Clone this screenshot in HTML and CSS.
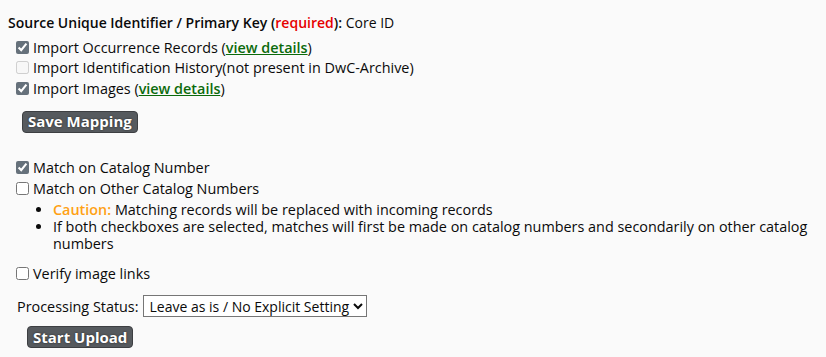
FILE: index.html
```html
<!DOCTYPE html>
<html>
<head>
<meta charset="utf-8">
<link rel="stylesheet" href="styles.css">
</head>
<body>
<div class="page">
  <div class="title"><b>Source Unique Identifier / Primary Key (<span class="req">required</span>):</b> Core ID</div>
  <div class="imports">
    <div class="row"><input type="checkbox" checked> <span>Import Occurrence Records (<a href="#">view details</a>)</span></div>
    <div class="row"><input type="checkbox" disabled> <span>Import Identification History(not present in DwC-Archive)</span></div>
    <div class="row"><input type="checkbox" checked> <span>Import Images (<a href="#">view details</a>)</span></div>
    <div class="btnrow save"><button class="btn">Save Mapping</button></div>
  </div>
  <div class="match">
    <div class="row"><input type="checkbox" checked> <span>Match on Catalog Number</span></div>
    <div class="row"><input type="checkbox"> <span>Match on Other Catalog Numbers</span></div>
    <ul class="notes">
      <li><span class="caution">Caution:</span> Matching records will be replaced with incoming records</li>
      <li>If both checkboxes are selected, matches will first be made on catalog numbers and secondarily on other catalog numbers</li>
    </ul>
    <div class="row verify"><input type="checkbox"> <span>Verify image links</span></div>
    <div class="status">Processing Status: <select><option>Leave as is / No Explicit Setting</option></select></div>
    <div class="btnrow upload"><button class="btn">Start Upload</button></div>
  </div>
</div>
</body>
</html>
```
FILE: styles.css
```css
html, body { margin: 0; padding: 0; background: #fafafa; }
body {
  font-family: "Open Sans", "Liberation Sans", sans-serif;
  font-size: 14.4px;
  color: #0a0a0a;
}
.page { padding: 14px 8px 0 8px; }
.title { line-height: 18px; font-size: 14px; }
.title b { font-weight: 600; }
.req { color: #e60000; }
.imports { margin-top: 5px; padding-left: 8px; }
.row { display: flex; align-items: center; height: 20.5px; }
.row input {
  margin: 0 4px 0 0;
  width: 13px; height: 13px;
  accent-color: #66717b;
}
.row span { white-space: nowrap; }
a { color: #0b6a0b; font-weight: 600; text-decoration: underline; }
.btnrow.save { margin: 12px 0 0 6px; }
.btn {
  font-family: "Open Sans", "Liberation Sans", sans-serif;
  font-size: 15px;
  font-weight: 700;
  color: #fff;
  background: #565a5e;
  border: 1px solid #3d3f42;
  border-radius: 4px;
  padding: 0 5px;
  height: 22px;
  line-height: 19px;
  text-shadow: 0 0 2px #222;
}
.match { margin-top: 25px; padding-left: 8px; }
.notes { margin: 2px 0 0 0; padding-left: 37px; line-height: 17px; }
.caution { color: #ffa114; font-weight: 600; }
.verify { margin-top: 12px; }
.status { margin-top: 10px; padding-left: 1px; display: flex; align-items: center; gap: 4px; height: 24px; }
select {
  font-family: "Open Sans", "Liberation Sans", sans-serif;
  font-size: 14px;
  color: #0a0a0a;
  background: #fff;
  border: 1px solid #767676;
  border-radius: 0;
  height: 22px;
  padding: 0 0 0 2px;
}
.btnrow.upload { margin: 8px 0 0 11px; }
```
